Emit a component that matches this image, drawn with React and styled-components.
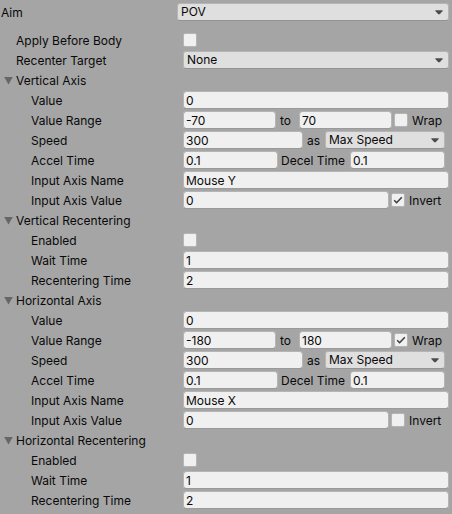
import React, { useId, useState } from "react";
import styled, { createGlobalStyle } from "styled-components";

const GlobalStyle = createGlobalStyle`
  *, *::before, *::after { box-sizing: border-box; }
  body {
    margin: 0;
    background: #a5a5a5;
    color: #090909;
    font: 12px/18px Inter, "Liberation Sans", sans-serif;
  }
  input, select, button { font: inherit; color: inherit; margin: 0; }
`;

const Panel = styled.main`
  display: flex;
  flex-direction: column;
  gap: 2px;
  padding: 3px 3px 5px 0;
`;

const Row = styled.div`
  display: flex;
  height: 18px;
  margin-bottom: ${(p) => (p.$header ? 8 : 0)}px;
`;

const RowLabel = styled.label`
  flex: none;
  width: ${(p) => (p.$header ? 177 : 183)}px;
  padding-left: ${(p) => p.$indent}px;
  padding-top: 1px;
  line-height: 18px;
  white-space: nowrap;
`;

const Value = styled.div`
  display: flex;
  flex: 1;
  min-width: 0;
  padding-right: ${(p) => (p.$inset ? 4 : 0)}px;
`;

const TextField = styled.input`
  flex: 1 1 8px;
  width: 8px;
  min-width: 0;
  height: 18px;
  padding: 1px 2px 0;
  border: 1px solid #b5b5b5;
  border-bottom-color: #9a9a9a;
  border-radius: 3px;
  background: #f0f0f0;
  background-clip: padding-box;
  outline: none;
  &:focus { border-color: #3a72b0; }
`;

const SelectBox = styled.div`
  position: relative;
  flex: 1 1 8px;
  min-width: 0;
  display: flex;
`;

const Dropdown = styled.select`
  appearance: none;
  width: 100%;
  height: 18px;
  padding: 0 18px 1px 3px;
  border: 1px solid #b5b5b5;
  border-bottom-color: #939393;
  border-radius: 3px;
  background: #dfdfdf;
  line-height: 15px;
  outline: none;
  &:focus { border-color: #3a72b0; }
`;

const Arrow = styled.svg`
  position: absolute;
  top: 7px;
  right: 6px;
  pointer-events: none;
`;

const Between = styled.label`
  flex: none;
  width: ${(p) => p.$width}px;
  padding-top: 1px;
  padding-left: ${(p) => p.$lead}px;
  white-space: nowrap;
`;

const Check = styled.input`
  appearance: none;
  flex: none;
  width: 14px;
  height: 14px;
  margin: 2px 0 0;
  border: 1px solid #b5b5b5;
  border-radius: 2px;
  background: #f0f0f0;
  display: block;
`;

const CheckBox = styled.span`
  position: relative;
  flex: none;
  width: 14px;
`;

const Tick = styled.svg`
  position: absolute;
  top: 2px;
  left: 0;
  pointer-events: none;
`;

const Toggle = styled.label`
  display: flex;
  flex: none;
  gap: 4px;
  width: ${(p) => p.$width}px;
  padding-left: 2px;
`;

const ToggleText = styled.span`
  padding-top: 1px;
`;

const Foldout = styled.button`
  display: flex;
  gap: 3px;
  width: 100%;
  padding: 1px 0 0 4px;
  border: 0;
  background: none;
  text-align: left;
  line-height: 18px;
`;

const FoldIcon = styled.svg`
  flex: none;
  margin-top: 4px;
  transform: rotate(${(p) => (p.$open ? 0 : -90)}deg);
`;

function Select({ id, value }) {
  return (
    <SelectBox>
      <Dropdown id={id} defaultValue={value}>
        <option>{value}</option>
      </Dropdown>
      <Arrow width="8" height="5" viewBox="0 0 8 5" aria-hidden="true">
        <path d="M0.3 0.3H7.7V0.9L4.7 4.3H3.3L0.3 0.9Z" fill="#4c4c4c" />
      </Arrow>
    </SelectBox>
  );
}

function CheckControl({ id, initial = false }) {
  const [checked, setChecked] = useState(initial);
  return (
    <CheckBox>
      <Check id={id} type="checkbox" checked={checked} onChange={() => setChecked(!checked)} />
      {checked && (
        <Tick width="14" height="14" viewBox="0 0 14 14" aria-hidden="true">
          <path d="M3.2 7.3L5.6 9.7L10.8 4.3" fill="none" stroke="#3c3c3c" strokeWidth="1.6" />
        </Tick>
      )}
    </CheckBox>
  );
}

function Field({ label, indent = 31, header, inset, children }) {
  const id = useId();
  return (
    <Row $header={header}>
      <RowLabel htmlFor={id} $indent={indent} $header={header}>{label}</RowLabel>
      <Value $inset={inset}>{children(id)}</Value>
    </Row>
  );
}

function TextRow({ label, value }) {
  return <Field label={label}>{(id) => <TextField id={id} defaultValue={value} />}</Field>;
}

function Section({ title, children }) {
  const [open, setOpen] = useState(true);
  return (
    <>
      <Row>
        <Foldout type="button" aria-expanded={open} onClick={() => setOpen(!open)}>
          <FoldIcon $open={open} width="9" height="9" viewBox="0 0 9 9" aria-hidden="true">
            <path d="M0.2 1H8.8L4.5 8.6Z" fill="#666666" />
          </FoldIcon>
          {title}
        </Foldout>
      </Row>
      {open && children}
    </>
  );
}

function AxisSection({ title, min, max, wrap, axisName, invert }) {
  return (
    <Section title={title}>
      <TextRow label="Value" value="0" />
      <Field label="Value Range">
        {(id) => (
          <>
            <TextField id={id} defaultValue={min} />
            <Between htmlFor={`${id}-max`} $width={23} $lead={4}>to</Between>
            <TextField id={`${id}-max`} defaultValue={max} />
            <Toggle $width={57}>
              <CheckControl initial={wrap} />
              <ToggleText>Wrap</ToggleText>
            </Toggle>
          </>
        )}
      </Field>
      <Field label="Speed" inset>
        {(id) => (
          <>
            <TextField id={id} defaultValue="300" />
            <Between htmlFor={`${id}-mode`} $width={22} $lead={4}>as</Between>
            <Select id={`${id}-mode`} value="Max Speed" />
          </>
        )}
      </Field>
      <Field label="Accel Time" inset>
        {(id) => (
          <>
            <TextField id={id} defaultValue="0.1" />
            <Between htmlFor={`${id}-decel`} $width={72} $lead={3}>Decel Time</Between>
            <TextField id={`${id}-decel`} defaultValue="0.1" />
          </>
        )}
      </Field>
      <TextRow label="Input Axis Name" value={axisName} />
      <Field label="Input Axis Value">
        {(id) => (
          <>
            <TextField id={id} defaultValue="0" />
            <Toggle $width={60}>
              <CheckControl initial={invert} />
              <ToggleText>Invert</ToggleText>
            </Toggle>
          </>
        )}
      </Field>
    </Section>
  );
}

function RecenteringSection({ title }) {
  return (
    <Section title={title}>
      <Field label="Enabled">{(id) => <CheckControl id={id} />}</Field>
      <TextRow label="Wait Time" value="1" />
      <TextRow label="Recentering Time" value="2" />
    </Section>
  );
}

export default function App() {
  return (
    <>
      <GlobalStyle />
      <Panel>
        <Field label="Aim" indent={1} header>{(id) => <Select id={id} value="POV" />}</Field>
        <Field label="Apply Before Body" indent={16}>{(id) => <CheckControl id={id} />}</Field>
        <Field label="Recenter Target" indent={16}>{(id) => <Select id={id} value="None" />}</Field>
        <AxisSection title="Vertical Axis" min="-70" max="70" wrap={false} axisName="Mouse Y" invert />
        <RecenteringSection title="Vertical Recentering" />
        <AxisSection title="Horizontal Axis" min="-180" max="180" wrap axisName="Mouse X" invert={false} />
        <RecenteringSection title="Horizontal Recentering" />
      </Panel>
    </>
  );
}
